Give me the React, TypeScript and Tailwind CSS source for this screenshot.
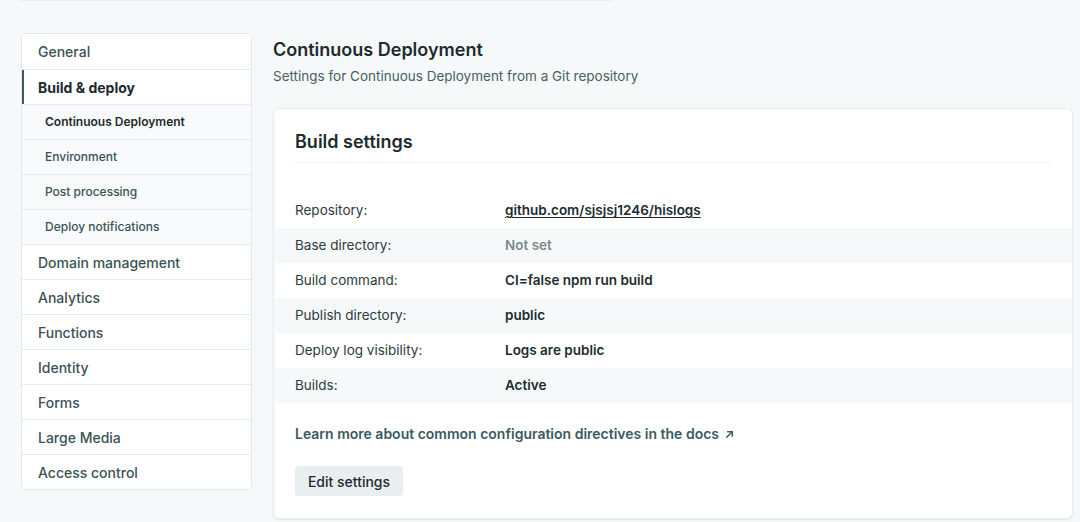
import React from "react";

const font = { fontFamily: "Inter, 'Noto Sans', sans-serif" };

type NavItem = { label: string; sub?: boolean; active?: boolean; current?: boolean };

const nav: NavItem[] = [
  { label: "General" },
  { label: "Build & deploy", active: true },
  { label: "Continuous Deployment", sub: true, current: true },
  { label: "Environment", sub: true },
  { label: "Post processing", sub: true },
  { label: "Deploy notifications", sub: true },
  { label: "Domain management" },
  { label: "Analytics" },
  { label: "Functions" },
  { label: "Identity" },
  { label: "Forms" },
  { label: "Large Media" },
  { label: "Access control" },
];

const rows: { label: string; value: string; kind?: "link" | "muted" }[] = [
  { label: "Repository:", value: "github.com/sjsjsj1246/hislogs", kind: "link" },
  { label: "Base directory:", value: "Not set", kind: "muted" },
  { label: "Build command:", value: "CI=false npm run build" },
  { label: "Publish directory:", value: "public" },
  { label: "Deploy log visibility:", value: "Logs are public" },
  { label: "Builds:", value: "Active" },
];

export default function App() {
  return (
    <div className="w-[1080px] h-[522px] overflow-hidden bg-[#f6f9fa] relative" style={font}>
      <div className="absolute left-[20px] top-0 w-[592px] h-px bg-[#e8edef]" />
      <div className="flex items-start pl-[21px] pt-[33px] gap-[21px]">
        <aside className="w-[231px] shrink-0 bg-white border border-[#e3e9eb] rounded-[4px] overflow-hidden">
          {nav.map((n, i) => (
            <div
              key={n.label}
              className={
                "h-[35px] flex items-center relative " +
                (i > 0 ? "border-t border-[#e6ebed] " : "") +
                (n.sub ? "bg-[#f8fafb] pl-[23px] text-[12px] " : "bg-white pl-[16px] text-[14px] ") +
                (n.active
                  ? "font-bold text-[#1c2b2f] "
                  : n.current
                  ? "font-semibold text-[#1c2b2f] "
                  : "font-medium text-[#3a5256] ")
              }
            >
              {n.active && <div className="absolute left-0 top-0 bottom-0 w-[2px] bg-[#3f5a5e]" />}
              {n.label}
            </div>
          ))}
        </aside>
        <main className="w-[800px] shrink-0">
          <h1 className="mt-[3px] text-[18px] leading-7 font-semibold text-[#1c2b2f]">Continuous Deployment</h1>
          <p className="mt-[2px] text-[13.5px] leading-5 text-[#4a5f63]">
            Settings for Continuous Deployment from a Git repository
          </p>
          <section className="mt-[22px] bg-white border border-[#e8edef] rounded-[6px] shadow-[0_1px_2px_rgba(0,0,0,0.08)] pt-[19px] pb-[22px]">
            <div className="px-[21px]">
              <h2 className="text-[18px] leading-7 font-semibold text-[#1c2b2f]">Build settings</h2>
              <div className="mt-[6px] h-px bg-[#eef2f3]" />
            </div>
            <div className="mt-[30px]">
              {rows.map((r, i) => (
                <div
                  key={r.label}
                  className={"h-[35px] flex items-center px-[21px] text-[13.5px] " + (i % 2 === 1 ? "bg-[#f6f9fa]" : "bg-white")}
                >
                  <div className="w-[210px] text-[#2b3c40]">{r.label}</div>
                  <div
                    className={
                      "font-semibold " +
                      (r.kind === "link"
                        ? "text-[#1c2b2f] underline underline-offset-2 decoration-[#1c2b2f]"
                        : r.kind === "muted"
                        ? "text-[#7a898c]"
                        : "text-[#1c2b2f]")
                    }
                  >
                    {r.value}
                  </div>
                </div>
              ))}
            </div>
            <div className="px-[21px]">
              <div className="mt-[21px] leading-5 text-[14px] font-semibold text-[#3a5b5f] flex items-center gap-[5px]">
                <span>Learn more about common configuration directives in the docs</span>
                <svg width="11" height="11" viewBox="0 0 12 12" fill="none" stroke="#3a5b5f" strokeWidth="1.6" strokeLinecap="round" strokeLinejoin="round">
                  <path d="M3 9L9 3" />
                  <path d="M4 3h5v5" />
                </svg>
              </div>
              <button className="mt-[22px] h-[30px] w-[108px] rounded-[4px] bg-[#e9eef0] text-[14px] font-medium text-[#1c2b2f] flex items-center justify-center">
                Edit settings
              </button>
            </div>
          </section>
        </main>
      </div>
    </div>
  );
}
